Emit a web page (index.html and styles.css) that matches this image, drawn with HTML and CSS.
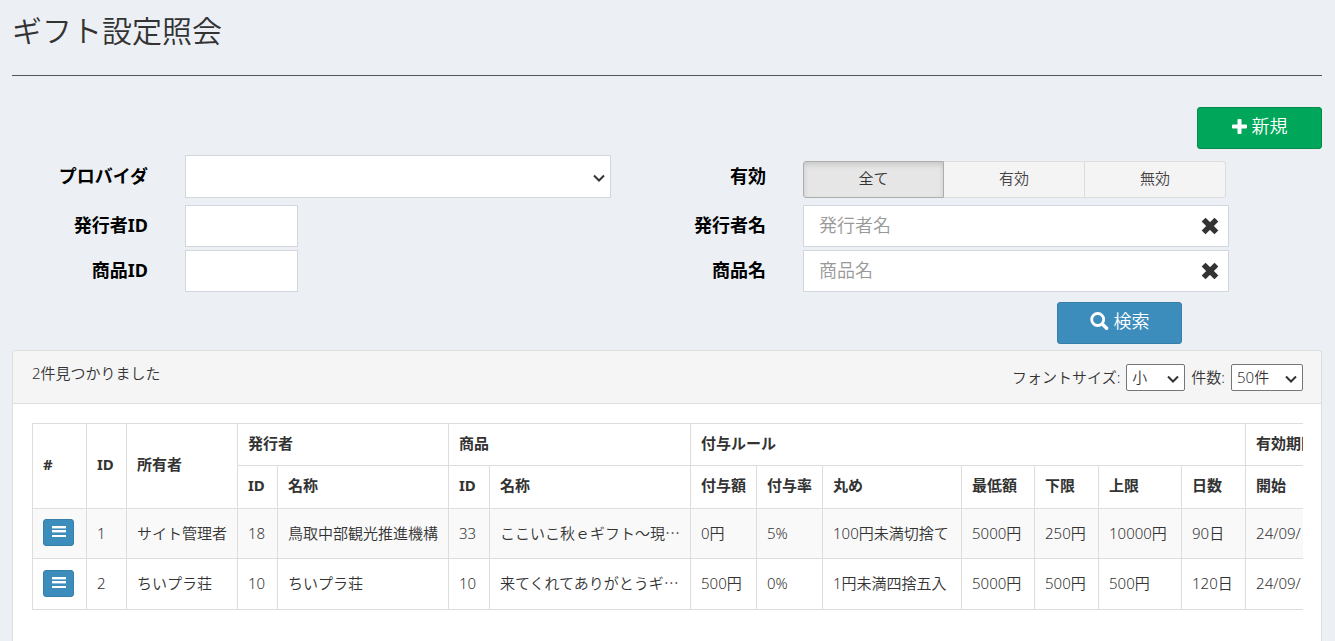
FILE: index.html
```html
<!DOCTYPE html>
<html lang="ja">
<head>
<meta charset="utf-8">
<title>ギフト設定照会</title>
<meta name="viewport" content="width=device-width, initial-scale=1">
<link rel="stylesheet" href="styles.css">
</head>
<body>
<svg class="sprite" aria-hidden="true">
  <symbol id="times" viewBox="0 0 18 18"><path d="M4.500 4.500l9 9M13.500 4.500l-9 9" fill="none" stroke="currentColor" stroke-width="5.400" stroke-linecap="square" stroke-linejoin="round"/></symbol>
  <symbol id="menu" viewBox="0 0 14 11"><path d="M0 0h14v2H0zM0 4h14v2H0zM0 9h14v2H0z" fill="currentColor"/><path d="M0 2h14v1H0zM0 6h14v1H0z" fill="currentColor" opacity=".4"/></symbol>
  <symbol id="chevron" viewBox="0 0 12 8"><path d="M1 1.500l5 5 5-5" fill="none" stroke="currentColor" stroke-width="2"/></symbol>
</svg>
<header class="page-header"><h1>ギフト設定照会</h1></header>
<main class="content">
  <div class="toolbar">
    <button class="btn btn-new" type="button">
      <svg class="icon-plus" viewBox="0 0 15 15" aria-hidden="true"><path d="M6.500 0h2q1 0 1 1v4.500h4.500q1 0 1 1v2q0 1-1 1H9.500V14q0 1-1 1h-2q-1 0-1-1V9.500H1q-1 0-1-1v-2q0-1 1-1h4.500V1q0-1 1-1z" fill="currentColor"/></svg>
      <span>新規</span>
    </button>
  </div>
  <form class="search">
    <div class="fields">
      <label class="name" for="provider">プロバイダ</label>
      <div class="select">
        <select class="control provider" id="provider"><option></option></select>
        <svg class="chevron" aria-hidden="true"><use href="#chevron"/></svg>
      </div>
      <span class="name" id="valid-label">有効</span>
      <div class="segments" role="radiogroup" aria-labelledby="valid-label">
        <label class="segment"><input type="radio" name="valid" checked><span>全て</span></label>
        <label class="segment"><input type="radio" name="valid"><span>有効</span></label>
        <label class="segment"><input type="radio" name="valid"><span>無効</span></label>
      </div>
    </div>
    <div class="fields">
      <label class="name" for="issuer-id">発行者ID</label>
      <input class="control short" id="issuer-id" type="text">
      <label class="name" for="issuer-name">発行者名</label>
      <div class="clearable">
        <input class="control" id="issuer-name" type="text" placeholder="発行者名">
        <button class="clear" type="button" aria-label="クリア"><svg aria-hidden="true"><use href="#times"/></svg></button>
      </div>
    </div>
    <div class="fields">
      <label class="name" for="item-id">商品ID</label>
      <input class="control short" id="item-id" type="text">
      <label class="name" for="item-name">商品名</label>
      <div class="clearable">
        <input class="control" id="item-name" type="text" placeholder="商品名">
        <button class="clear" type="button" aria-label="クリア"><svg aria-hidden="true"><use href="#times"/></svg></button>
      </div>
    </div>
    <div class="actions">
      <button class="btn btn-search" type="button">
        <svg class="icon-search" viewBox="0 0 19 18" aria-hidden="true"><circle cx="7.700" cy="7.500" r="6" fill="none" stroke="currentColor" stroke-width="2.800"/><path d="M12.300 12l4.300 4.200" stroke="currentColor" stroke-width="3.400" stroke-linecap="round"/></svg>
        <span>検索</span>
      </button>
    </div>
  </form>
  <section class="panel">
    <div class="panel-head">
      <p class="count">2件見つかりました</p>
      <div class="options">
        <label for="font-size">フォントサイズ:</label>
        <div class="select">
          <select class="mini size" id="font-size"><option>小</option></select>
          <svg class="chevron" aria-hidden="true"><use href="#chevron"/></svg>
        </div>
        <label for="per-page">件数:</label>
        <div class="select">
          <select class="mini per-page" id="per-page"><option>50件</option></select>
          <svg class="chevron" aria-hidden="true"><use href="#chevron"/></svg>
        </div>
      </div>
    </div>
    <div class="table-scroll">
      <table>
        <colgroup><col class="w54"><col class="w40"><col class="w111"><col class="w40"><col class="w171"><col class="w41"><col class="w201"><col class="w66"><col class="w66"><col class="w139"><col class="w73"><col class="w64"><col class="w83"><col class="w64"><col class="w83"></colgroup>
        <thead>
          <tr><th rowspan="2">#</th><th rowspan="2">ID</th><th rowspan="2">所有者</th><th colspan="2">発行者</th><th colspan="2">商品</th><th colspan="7">付与ルール</th><th>有効期間</th></tr>
          <tr><th>ID</th><th>名称</th><th>ID</th><th>名称</th><th>付与額</th><th>付与率</th><th>丸め</th><th>最低額</th><th>下限</th><th>上限</th><th>日数</th><th>開始</th></tr>
        </thead>
        <tbody>
          <tr><td><button class="row-menu" type="button" aria-label="メニュー"><svg aria-hidden="true"><use href="#menu"/></svg></button></td><td>1</td><td>サイト管理者</td><td>18</td><td>鳥取中部観光推進機構</td><td>33</td><td>ここいこ秋ｅギフト～現⋯</td><td>0円</td><td>5%</td><td>100円未満切捨て</td><td>5000円</td><td>250円</td><td>10000円</td><td>90日</td><td>24/09/</td></tr>
          <tr><td><button class="row-menu" type="button" aria-label="メニュー"><svg aria-hidden="true"><use href="#menu"/></svg></button></td><td>2</td><td>ちいプラ荘</td><td>10</td><td>ちいプラ荘</td><td>10</td><td>来てくれてありがとうギ⋯</td><td>500円</td><td>0%</td><td>1円未満四捨五入</td><td>5000円</td><td>500円</td><td>500円</td><td>120日</td><td>24/09/</td></tr>
        </tbody>
      </table>
    </div>
  </section>
</main>
</body>
</html>
```
FILE: styles.css
```css
* { box-sizing: border-box; }
body {
  margin: 0;
  min-height: 100vh;
  display: flex;
  flex-direction: column;
  padding: 0 13px 0 12px;
  background: #ecf0f5;
  color: #333;
  font: 350 15px/22px "Noto Sans", "Noto Sans CJK JP", sans-serif;
}
button, input, select { font: inherit; color: inherit; }
.sprite { position: absolute; width: 0; height: 0; }
.page-header { border-bottom: 1px solid #555; padding: 10px 0 24px; }
h1 { margin: 0; font-size: 30px; line-height: 41px; font-weight: 350; }
.content { flex: 1; display: flex; flex-direction: column; }
.toolbar { display: flex; justify-content: flex-end; padding: 31px 0 6px; }
.btn {
  display: flex;
  align-items: center;
  justify-content: center;
  gap: 5px;
  width: 125px;
  height: 42px;
  padding: 0 0 4px;
  border: 1px solid;
  border-radius: 3px;
  color: #fff;
  font-size: 18px;
}
.btn-new { background: #00a65a; border-color: #008d4c; }
.btn-search { background: #3c8dbc; border-color: #367fa9; }
.icon-plus { width: 15px; height: 15px; }
.icon-search { width: 19px; height: 18px; }
.search { display: flex; flex-direction: column; gap: 3px; }
.fields {
  display: grid;
  grid-template-columns: 136fr 426fr 118fr 426fr 56fr;
  column-gap: 37px;
  align-items: center;
}
.fields:first-child { margin-bottom: 4px; }
.name { padding-bottom: 2px; color: #000; font-size: 18px; font-weight: 700; text-align: right; white-space: nowrap; }
.control {
  display: block;
  width: 100%;
  height: 42px;
  padding: 0 15px 3px;
  border: 1px solid #d2d6de;
  border-radius: 0;
  background: #fff;
  font-size: 18px;
}
.control::placeholder { color: #999; opacity: 1; }
.select { position: relative; }
.select select { appearance: none; }
.chevron {
  position: absolute;
  top: 50%;
  right: 6px;
  width: 12px;
  height: 8px;
  margin-top: -3px;
  pointer-events: none;
}
.provider { height: 43px; }
.short { width: 113px; }
.clearable { position: relative; }
.clear {
  position: absolute;
  top: 12px;
  right: 10px;
  width: 18px;
  height: 18px;
  padding: 0;
  border: 0;
  background: none;
}
.clear svg { display: block; width: 18px; height: 18px; }
.segments { display: flex; align-self: end; margin-right: 3px; }
.segment { flex: 1; }
.segment input { position: absolute; opacity: 0; }
.segment span {
  display: block;
  height: 37px;
  line-height: 32px;
  text-align: center;
  background: #f4f4f4;
  border: 1px solid #ddd;
  border-left-width: 0;
  color: #444;
}
.segment:first-child span { border-left-width: 1px; border-radius: 3px 0 0 3px; }
.segment:last-child span { border-radius: 0 3px 3px 0; }
.segment input:checked + span {
  background: #e6e6e6;
  border-color: #adadad;
  box-shadow: inset 0 3px 5px rgba(0, 0, 0, .125);
  color: #333;
}
.actions { display: flex; justify-content: flex-end; padding: 7px 140px 6px 0; }
.panel {
  flex: 1;
  background: #fff;
  border: 1px solid #ddd;
  border-bottom: 0;
  border-radius: 4px 4px 0 0;
}
.panel-head {
  display: flex;
  justify-content: space-between;
  padding: 11px 18px 12px 19px;
  background: #f5f5f5;
  border-bottom: 1px solid #ddd;
  border-radius: 3px 3px 0 0;
}
.count { margin: 0; }
.options { display: flex; align-items: center; gap: 6px; padding-top: 2px; }
.options label { padding-bottom: 2px; }
.mini {
  display: block;
  height: 27px;
  padding: 0 5px 2px;
  border: 1px solid #767676;
  border-radius: 2px;
  background: #fff;
}
.size { width: 59px; }
.per-page { width: 72px; }
.table-scroll { margin: 19px 18px 19px 19px; overflow-x: auto; scrollbar-width: none; }
table { width: 1297px; table-layout: fixed; border-collapse: collapse; }
th, td {
  border: 1px solid #ddd;
  padding: 0 0 2px 10px;
  text-align: left;
  white-space: nowrap;
}
th { height: 42px; padding-bottom: 4px; font-weight: 700; }
thead tr:last-child th { height: 43px; }
td { height: 50px; }
tbody tr:last-child td { height: 51px; }
tbody tr:nth-child(odd) { background: #f9f9f9; }
.w40 { width: 40px; }
.w41 { width: 41px; }
.w54 { width: 54px; }
.w64 { width: 64px; }
.w66 { width: 66px; }
.w73 { width: 73px; }
.w83 { width: 83px; }
.w111 { width: 111px; }
.w139 { width: 139px; }
.w171 { width: 171px; }
.w201 { width: 201px; }
.row-menu {
  display: block;
  width: 31px;
  height: 27px;
  padding: 0;
  border: 1px solid #367fa9;
  border-radius: 3px;
  background: #3c8dbc;
  color: #fff;
}
.row-menu svg { display: block; width: 14px; height: 11px; margin: 0 auto 2px; }
```
